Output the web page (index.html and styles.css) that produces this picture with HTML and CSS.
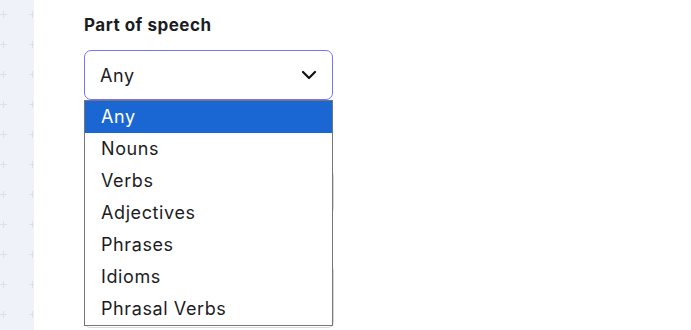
FILE: index.html
```html
<!DOCTYPE html>
<html lang="en">

<head>
    <meta charset="UTF-8">
    <title>Part of speech</title>
    <link rel="stylesheet" href="styles.css">
</head>

<body>
    <div class="page">
        <div class="rail"></div>
        <div class="content">
            <div class="field">
                <div class="label">Part of speech</div>
                <div class="select">
                    <span>Any</span>
                    <svg class="chevron" width="16" height="10" viewBox="0 0 16 10">
                        <path d="M2 2 L8 8 L14 2" fill="none" stroke="#111" stroke-width="2.2" stroke-linecap="round" stroke-linejoin="round" />
                    </svg>
                </div>
                <!-- fields under the open list -->
                <div class="under one"></div>
                <div class="under two"></div>
                <ul class="list">
                    <li class="active">Any</li>
                    <li>Nouns</li>
                    <li>Verbs</li>
                    <li>Adjectives</li>
                    <li>Phrases</li>
                    <li>Idioms</li>
                    <li>Phrasal Verbs</li>
                </ul>
            </div>
        </div>
    </div>
</body>

</html>
```

FILE: styles.css
```css
body {
    margin: 0;
    background: #fff;
    font-family: Inter, "Noto Sans", sans-serif;
    color: #1c1c24;
}

.page {
    display: flex;
    height: 330px;
    overflow: hidden;
}

/* strip at the left with little plus marks every 30px */
.rail {
    width: 34px;
    flex: none;
    background-color: #eff2f8;
    background-image:
        linear-gradient(transparent 11px, #dce0ea 11px, #dce0ea 18px, transparent 18px),
        linear-gradient(transparent 14px, #dce0ea 14px, #dce0ea 15px, transparent 15px),
        linear-gradient(transparent 11px, #dce0ea 11px, #dce0ea 18px, transparent 18px),
        linear-gradient(transparent 14px, #dce0ea 14px, #dce0ea 15px, transparent 15px);
    background-size: 1px 30px, 7px 30px, 1px 30px, 5px 30px;
    background-position: 3px 0, 0 0, 32px 0, 29px 0;
    background-repeat: repeat-y;
}

.content {
    flex: 1;
    padding: 15px 0 0 50px;
}

.field {
    position: relative;
    width: 249px;
}

.label {
    font-size: 17px;
    font-weight: 700;
    letter-spacing: 0.5px;
    line-height: 20px;
    color: #1c1c24;
    margin-bottom: 15px;
}

.select {
    height: 48px;
    border: 1px solid #7d73f2;
    border-radius: 7px;
    display: flex;
    align-items: center;
    justify-content: space-between;
    padding: 0 15px;
    font-size: 18px;
    letter-spacing: 0.6px;
    color: #1c1c24;
}

.chevron {
    display: block;
}

.under {
    position: absolute;
    left: 0;
    width: 248px;
    border: 1px solid #d8d8dc;
    border-radius: 6px;
}

.under.one {
    top: 155px;
    height: 42px;
}

.under.two {
    top: 250px;
    height: 61px;
}

.list {
    position: absolute;
    left: 0;
    top: 85px;
    width: 247px;
    margin: 0;
    padding: 0;
    list-style: none;
    background: #fff;
    border: 1px solid #767676;
}

.list li {
    height: 32px;
    line-height: 32px;
    padding-left: 16px;
    font-size: 18px;
    letter-spacing: 0.6px;
    color: #1c1c24;
}

.list li.active {
    background: #1a66d2;
    color: #fff;
}
```
